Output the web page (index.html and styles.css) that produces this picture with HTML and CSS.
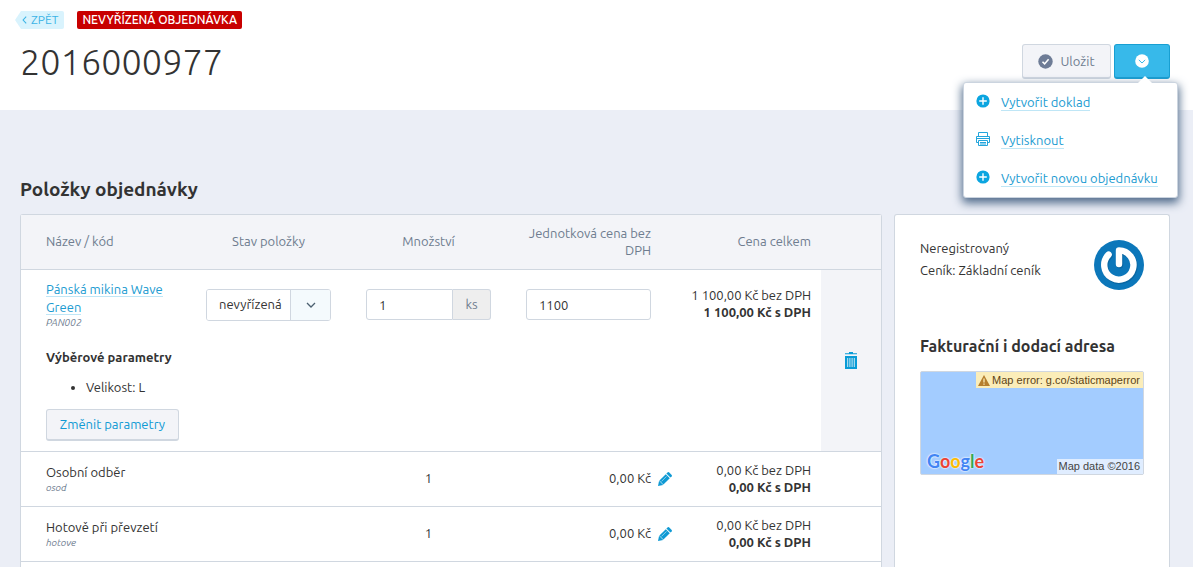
FILE: index.html
```html
<!DOCTYPE html>
<html lang="cs">
<head>
<meta charset="utf-8">
<title>Objednávka 2016000977</title>
<link rel="stylesheet" href="styles.css">
</head>
<body>
<svg class="sprite" width="0" height="0" aria-hidden="true">
  <symbol id="plus" viewBox="0 0 14 14"><circle cx="7" cy="7" r="6.6" fill="#0ba5e0"/><path d="M7 3.2v7.6M3.2 7h7.6" stroke="#fff" stroke-width="1.4"/></symbol>
  <symbol id="pencil" viewBox="0 0 14 14"><path d="M0 14l1.1-5.2 4.1 4.1z" fill="#0f9ad4"/><path d="M1.4 8.4l6.4-6.2 4 4-6.4 6.4z" fill="#0f9ad4"/><path d="M8.4 1.6L9.8.3q.6-.5 1.2 0l2.7 2.7q.5.6 0 1.2l-1.3 1.4z" fill="#0f9ad4"/><path d="M3.5 9.4l5-5" stroke="#a9dcf0" stroke-width=".8"/></symbol>
  <symbol id="down" viewBox="0 0 10 6"><path d="M1 1l4 4 4-4" fill="none" stroke="currentColor" stroke-width="1.3"/></symbol>
</svg>
<header class="top">
  <div class="top-main">
    <div class="crumbs">
      <a class="back" href="#"><svg width="5" height="8" viewBox="0 0 5 8"><path d="M4.2.6L1.1 4l3.1 3.4" fill="none" stroke="#3cb4e6" stroke-width="1.1"/></svg>ZPĚT</a>
      <span class="status">NEVYŘÍZENÁ OBJEDNÁVKA</span>
    </div>
    <h1 class="order-no">2016000977</h1>
  </div>
  <div class="actions">
    <button class="btn save" type="button"><svg width="15" height="15" viewBox="0 0 15 15"><circle cx="7.5" cy="7.5" r="7.2" fill="#6e7c96"/><path d="M4.5 7.8l2.1 2.1 4-4.6" fill="none" stroke="#fff" stroke-width="1.6"/></svg>Uložit</button>
    <button class="btn more" type="button" aria-label="Další akce"><svg width="14" height="14" viewBox="0 0 14 14"><circle cx="7" cy="7" r="6.8" fill="#fff"/><path d="M3.8 5.9L7 9l3.2-3.1" fill="none" stroke="#37b9ea" stroke-width="1"/></svg></button>
    <ul class="menu">
      <li><svg width="14" height="14"><use href="#plus"/></svg><a class="link" href="#">Vytvořit doklad</a></li>
      <li><svg width="14" height="14" viewBox="0 0 14 14" fill="none" stroke="#22a5dc"><path d="M2.5 4V.5h9V4M2.5 10.5h-2v-6h13v6h-2M2.5 8.5h9v5h-9zM4 10.5h6M4 12h6M.5 6.5h13"/></svg><a class="link" href="#">Vytisknout</a></li>
      <li><svg width="14" height="14"><use href="#plus"/></svg><a class="link" href="#">Vytvořit novou objednávku</a></li>
    </ul>
  </div>
</header>
<main class="content">
  <h2 class="section-title">Položky objednávky</h2>
  <section class="panel items">
    <table class="order">
      <colgroup><col><col><col><col><col><col class="col-action"></colgroup>
      <thead>
        <tr><th>Název / kód</th><th class="mid">Stav položky</th><th class="mid">Množství</th><th class="num">Jednotková cena bez DPH</th><th class="num">Cena celkem</th><th></th></tr>
      </thead>
      <tbody>
        <tr class="product">
          <td><a class="link" href="#">Pánská mikina Wave Green</a><em class="code">PAN002</em></td>
          <td><div class="select"><select aria-label="Stav položky"><option>nevyřízená</option></select><span class="select-arrow"><svg width="10" height="6"><use href="#down"/></svg></span></div></td>
          <td><div class="qty"><input class="field" aria-label="Množství" value="1"><span class="unit">ks</span></div></td>
          <td><input class="field" aria-label="Jednotková cena bez DPH" value="1100"></td>
          <td class="num price">1 100,00 Kč bez DPH<strong>1 100,00 Kč s DPH</strong></td>
          <td class="action" rowspan="2"><button class="icon-btn" type="button" aria-label="Odstranit"><svg width="12" height="17" viewBox="0 0 12 17"><path d="M0 1.3h4V0h4v1.3h4v1H0zM0 4h12v13H0z" fill="#089bd6"/><path d="M2.7 6v9M4.9 6v9M7.1 6v9M9.3 6v9" stroke="#cbe9f5" stroke-width="1"/></svg></button></td>
        </tr>
        <tr class="params">
          <td colspan="5"><strong>Výběrové parametry</strong><ul><li>Velikost: L</li></ul><button class="btn change" type="button">Změnit parametry</button></td>
        </tr>
        <tr class="extra">
          <td>Osobní odběr<em class="code">osod</em></td><td></td><td class="mid">1</td>
          <td class="num">0,00 Kč<button class="icon-btn edit" type="button" aria-label="Upravit cenu"><svg width="14" height="14"><use href="#pencil"/></svg></button></td>
          <td class="num price">0,00 Kč bez DPH<strong>0,00 Kč s DPH</strong></td><td></td>
        </tr>
        <tr class="extra">
          <td>Hotově při převzetí<em class="code">hotove</em></td><td></td><td class="mid">1</td>
          <td class="num">0,00 Kč<button class="icon-btn edit" type="button" aria-label="Upravit cenu"><svg width="14" height="14"><use href="#pencil"/></svg></button></td>
          <td class="num price">0,00 Kč bez DPH<strong>0,00 Kč s DPH</strong></td><td></td>
        </tr>
      </tbody>
    </table>
  </section>
  <aside class="panel customer">
    <div class="who">
      <div class="who-text"><p>Neregistrovaný</p><p>Ceník: Základní ceník</p></div>
      <svg width="50" height="50" viewBox="0 0 50 50" role="img" aria-label="Avatar"><circle cx="25" cy="25" r="25" fill="#0c77ba"/><path d="M25 24V10.4A14.6 14.6 0 1 1 14.6 14.6" transform="translate(.9 1.2)" fill="none" stroke="#08578c" stroke-opacity=".5" stroke-width="6.6" stroke-linecap="round" stroke-linejoin="round"/><path d="M25 24V10.4A14.6 14.6 0 1 1 14.6 14.6" fill="none" stroke="#fff" stroke-width="6.4" stroke-linecap="round" stroke-linejoin="round"/></svg>
    </div>
    <h3 class="address-title">Fakturační i dodací adresa</h3>
    <div class="map">
      <span class="map-error"><svg width="12" height="11" viewBox="0 0 12 11"><path d="M6 0l6 11H0z" fill="#b57e2d"/><path d="M6 3.5v4M6 8.5v1.2" stroke="#fbedb9" stroke-width="1.3"/></svg>Map error: g.co/staticmaperror</span>
      <div class="map-foot"><span class="google"><span class="g-blue">G</span><span class="g-red">o</span><span class="g-yellow">o</span><span class="g-blue">g</span><span class="g-green">l</span><span class="g-red">e</span></span><span class="map-data">Map data ©2016</span></div>
    </div>
  </aside>
</main>
</body>
</html>
```
FILE: styles.css
```css
* { box-sizing: border-box; }
body {
  margin: 0;
  min-height: 100vh;
  display: flex;
  flex-direction: column;
  background: #ebeef6;
  color: #333;
  font: 13px/17px Ubuntu, "Noto Sans", sans-serif;
}
h1, h2, h3, p, ul { margin: 0; }
button, input, select { font: inherit; color: inherit; margin: 0; }
svg { flex: none; display: block; }
.sprite { position: absolute; }

.top {
  display: flex;
  justify-content: space-between;
  height: 110px;
  padding: 11px 23px 0 15px;
  background: #fff;
}
.crumbs { display: flex; gap: 13px; font-size: 12px; line-height: 18px; }
.back {
  display: flex;
  align-items: center;
  gap: 4px;
  padding: 0 6px 0 7px;
  border-radius: 2px;
  background: #d9f3fd;
  color: #3cb4e6;
  text-decoration: none;
  clip-path: polygon(0 50%, 6px 0, 100% 0, 100% 100%, 6px 100%);
}
.status { padding: 0 5px; border-radius: 2px; background: #c80000; color: #fff; font-weight: 500; }
.order-no { margin: 9px 0 0 5px; font: 300 36px/48px Ubuntu, "Open Sans", sans-serif; }

.actions { position: relative; display: flex; align-items: flex-start; gap: 3px; padding-top: 33px; }
.btn {
  display: flex;
  align-items: center;
  justify-content: center;
  border: 1px solid #d0d7e0;
  border-bottom-width: 2px;
  border-radius: 3px;
  background: #f3f4f8;
}
.save { gap: 7px; width: 89px; height: 35px; color: #6e7c8f; }
.more { width: 56px; height: 35px; border-color: #189fd2; background: #37b9ea; }
.menu {
  position: absolute;
  z-index: 2;
  top: 71px;
  right: -8px;
  width: 215px;
  list-style: none;
  padding: 0;
  border: 1px solid #cbd4df;
  border-radius: 3px;
  background: #fff;
  box-shadow: 0 4px 10px 1px #4f6a8a;
}
.menu::before {
  content: "";
  position: absolute;
  top: -7px;
  right: 25px;
  border: 7px solid transparent;
  border-top: 0;
  border-bottom-color: #fff;
}
.menu li { display: flex; align-items: center; gap: 11px; height: 38px; padding: 1px 0 0 12px; white-space: nowrap; }
.menu svg { margin-bottom: 4px; }
.link { color: #1b9bd1; text-decoration: none; border-bottom: 1px solid #bfe6f6; }
.menu .link { line-height: 15px; }

.content {
  flex: 1;
  display: grid;
  grid-template-columns: minmax(0, 1fr) 276px;
  grid-template-rows: auto 1fr;
  column-gap: 12px;
  padding: 67px 23px 0 20px;
}
.section-title { grid-column: 1 / -1; margin-bottom: 13px; font-size: 19px; line-height: 24px; font-weight: 700; }
.panel { border: 1px solid #d0d7e0; border-bottom: 0; border-radius: 3px 3px 0 0; background: #fff; }

.order { width: 100%; table-layout: fixed; border-collapse: collapse; }
.col-action { width: 60px; }
.order th, .order td { padding: 0 10px 0 25px; text-align: left; }
.order th { height: 54px; background: #f3f4f8; color: #6e7c8f; font-weight: 400; border-bottom: 1px solid #d0d7e0; }
.order .mid { text-align: center; }
.order .num { text-align: right; }
.product td { vertical-align: top; padding-top: 19px; }
.product td:first-child { padding-top: 10px; line-height: 18px; }
.order .product .price { padding-top: 17px; }
.price { white-space: nowrap; }
.price strong, .code { display: block; }
.code { color: #6e7c8f; font-size: 10px; line-height: 13px; }
.order .action { padding: 0; vertical-align: middle; background: #f3f4f8; border-bottom: 1px solid #d0d7e0; }
.order .params td { padding-top: 20px; padding-bottom: 10px; border-bottom: 1px solid #d0d7e0; }
.params ul { margin: 13px 0; padding-left: 40px; }
.change { width: 133px; height: 32px; padding: 0; color: #0f9ad4; white-space: nowrap; }
.extra td { height: 55px; border-bottom: 1px solid #d0d7e0; }
.extra .num { position: relative; }
.icon-btn { display: block; margin: 0 auto; padding: 0; border: 0; background: none; }
.edit { position: absolute; top: 20px; right: -11px; }

.field { width: 100%; height: 31px; padding: 2px 12px 0; border: 1px solid #d0d7e0; border-radius: 3px; background: #fff; }
.qty { display: flex; }
.qty .field { flex: 1; min-width: 0; border-radius: 3px 0 0 3px; }
.unit {
  width: 38px;
  line-height: 29px;
  text-align: center;
  color: #6e7c8f;
  background: #eee;
  border: 1px solid #d0d7e0;
  border-left: 0;
  border-radius: 0 3px 3px 0;
}
.select { display: grid; grid-template-columns: 1fr 40px; height: 32px; border: 1px solid #d0d7e0; border-radius: 3px; overflow: hidden; }
.select select {
  grid-area: 1 / 1 / 2 / 3;
  appearance: none;
  padding: 0 40px 0 12px;
  border: 0;
  background: #fff;
}
.select-arrow {
  grid-area: 1 / 2;
  display: grid;
  place-items: center;
  background: #f4fafd;
  border-left: 1px solid #d0d7e0;
  color: #4b6070;
  pointer-events: none;
}

.customer { padding: 22px 25px; }
.who { display: flex; justify-content: space-between; line-height: 22px; }
.who svg { margin-top: 3px; }
.address-title { margin: 45px 0 14px; font-size: 16px; line-height: 22px; font-weight: 700; white-space: nowrap; }
.map {
  display: flex;
  flex-direction: column;
  justify-content: space-between;
  height: 104px;
  border: 1px solid #d0d7e0;
  border-radius: 2px;
  background: #a3ccff;
  font: 11px/15px "Liberation Sans", Arial, sans-serif;
}
.map-error { align-self: flex-end; display: flex; align-items: center; gap: 2px; padding: 0 3px 0 2px; line-height: 16px; background: #fbedb9; color: #5d4416; white-space: nowrap; }
.map-foot { display: flex; justify-content: space-between; align-items: flex-end; }
.google { padding: 0 0 2px 6px; font: 700 18px/22px Lato, sans-serif; text-shadow: 0 0 2px #fff, 0 0 2px #fff; }
.g-blue { color: #4285f4; }
.g-red { color: #ea4335; }
.g-yellow { color: #fbbc05; }
.g-green { color: #34a853; }
.map-data { padding: 0 3px 0 2px; background: #e0edff; color: #444; }
```
